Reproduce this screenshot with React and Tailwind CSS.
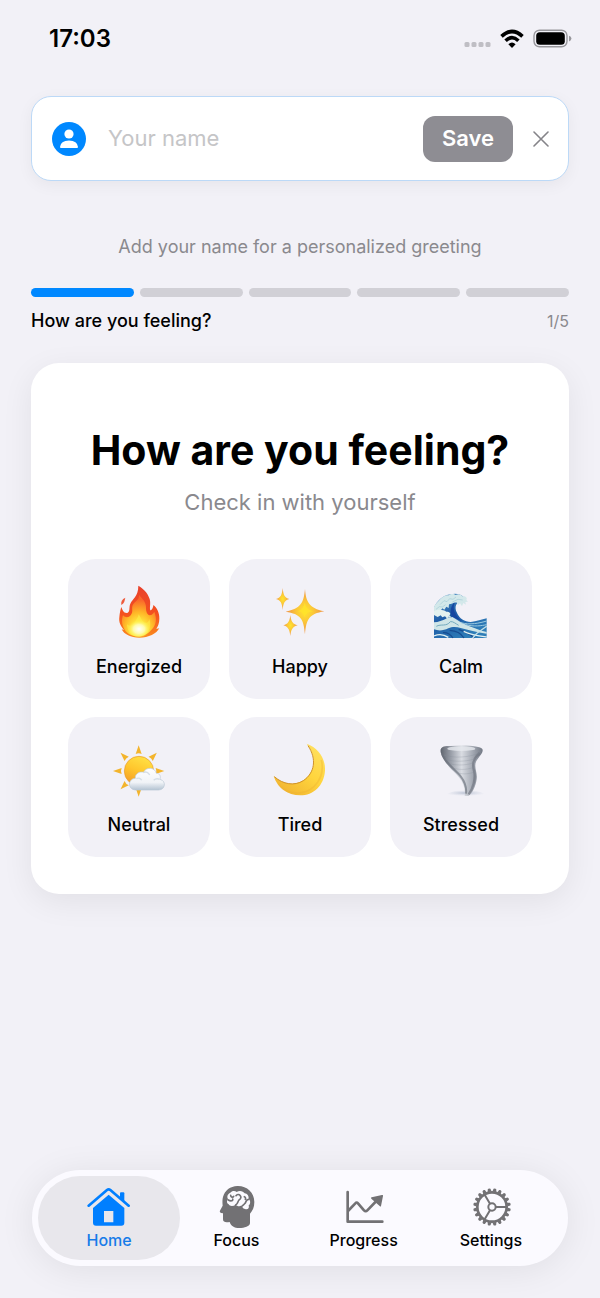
import { useState } from 'react'

function Fire() {
  return (
    <svg viewBox="0 0 162 162" className="size-[54px]" aria-hidden="true">
      <defs>
        <linearGradient id="fireOuter" x1="0" y1="0" x2="0" y2="1">
          <stop offset="0" stopColor="#e8402c" />
          <stop offset="0.55" stopColor="#f4511e" />
          <stop offset="1" stopColor="#fb8c1e" />
        </linearGradient>
        <radialGradient id="fireInner" cx="0.5" cy="0.86" r="0.75">
          <stop offset="0" stopColor="#fffcc0" />
          <stop offset="0.25" stopColor="#ffee42" />
          <stop offset="0.6" stopColor="#ffb526" />
          <stop offset="1" stopColor="#f9642a" />
        </radialGradient>
        <radialGradient id="fireGlow">
          <stop offset="0" stopColor="#ffffff" />
          <stop offset="0.5" stopColor="#fffbb8" stopOpacity="0.9" />
          <stop offset="1" stopColor="#ffee42" stopOpacity="0" />
        </radialGradient>
      </defs>
      <path d="M40 38C38 48 36 56 28 60C26 50 30 42 40 38Z" fill="#ee5a3c" />
      <path
        d="M79 2C92 9 108 24 113 42C117 56 112 68 115 76C120 76 124 66 124 60C134 66 143 84 142 101C142 114 138 123 133 131C137 132 140 130 142 129C134 146 110 158 82 158C56 158 36 148 29 133L36 135C26 124 20 112 22 97C23 84 26 72 28 66C31 74 34 84 44 84C56 82 50 66 55 56C61 42 79 34 79 2Z"
        fill="url(#fireOuter)"
      />
      <path
        d="M81 30C92 42 103 52 102 69C102 80 106 90 113 91C121 91 124 84 127 80C136 103 131 121 120 133C109 146 96 154 80 154C58 154 40 144 34 126C28 112 30 98 33 91C39 98 50 99 56 91C66 79 56 68 64 57C73 46 82 44 81 30Z"
        fill="url(#fireInner)"
      />
      <path
        d="M80 88C88 100 90 110 98 113C108 116 111 106 112 102C121 124 108 154 81 156C58 155 45 138 45 118C51 125 62 123 67 114C72 104 78 100 80 88Z"
        fill="#fff04a"
        opacity="0.55"
      />
      <ellipse cx="81" cy="132" rx="34" ry="27" fill="url(#fireGlow)" />
    </svg>
  )
}

function Sparkles() {
  return (
    <svg viewBox="0 0 162 162" className="size-[54px]" aria-hidden="true">
      <defs>
        <radialGradient id="spark">
          <stop offset="0" stopColor="#ffe52e" />
          <stop offset="0.45" stopColor="#fbc638" />
          <stop offset="1" stopColor="#ee9146" />
        </radialGradient>
      </defs>
      <g fill="url(#spark)">
        <path d="M96 12C99 50 108 70 154 79C108 87 100 102 96 148C92 102 84 87 38 80C84 70 92 54 96 12Z" />
        <path d="M29 9C31 31 35 38 49 42C35 46 31 54 29 75C27 54 23 46 9 42C23 38 27 31 29 9Z" />
        <path d="M52 90C54 109 59 117 74 121C59 125 54 134 52 153C50 134 45 125 31 121C45 117 50 109 52 90Z" />
      </g>
      <path d="M95 52C98 68 104 75 122 79C104 81 98 86 94 98C92 84 86 81 73 79C87 75 92 68 95 52Z" fill="#ffe32b" opacity="0.8" />
    </svg>
  )
}

function Wave() {
  return (
    <svg viewBox="0 0 162 162" className="size-[54px]" aria-hidden="true">
      <defs>
        <linearGradient id="sea" x1="0" y1="0" x2="0.6" y2="1">
          <stop offset="0" stopColor="#5d9ecb" />
          <stop offset="0.5" stopColor="#1d5ba6" />
          <stop offset="1" stopColor="#2f7eb8" />
        </linearGradient>
      </defs>
      <path
        d="M0 68C8 50 25 30 51 28C66 24 80 28 88 35L83 48C65 51 61 67 68 82C76 102 92 111 110 111C128 110 143 103 158 100V159H0Z"
        fill="url(#sea)"
      />
      <path d="M66 48C52 66 60 91 85 109L55 96C47 83 48 62 66 48Z" fill="#1646a0" />
      <path
        d="M0 66C4 55 14 49 19 42C27 35 34 29 44 31C50 25 61 26 65 30C74 25 82 29 85 34C96 33 101 40 97 45L102 50L94 51L96 59L88 54L84 64L78 55L72 61L69 53C60 50 53 58 45 58L44 69L37 65L31 74L25 70L19 78L13 75L0 86Z"
        fill="#d3e8ea"
      />
      <path d="M18 59L30 47L39 50L47 41L57 43L66 36M6 73L16 65L25 66L35 59M55 51L72 43L86 45" fill="none" stroke="#a3cbd6" strokeWidth="2" />
      <path
        d="M0 79C13 72 27 74 37 80C48 80 52 86 46 91L52 97L43 95L40 101L33 94L25 97L20 91L11 96L0 90Z"
        fill="#e3f1ef"
      />
      <path
        d="M0 112C13 112 26 105 36 101C43 94 48 98 55 96C65 101 76 111 91 117C111 125 134 136 158 141V146C127 142 103 135 80 129C68 125 55 124 43 130C29 137 13 138 0 133Z"
        fill="#cfe5e7"
      />
      <path d="M7 124C21 116 37 126 49 110C57 108 66 117 74 121" fill="none" stroke="#72aabe" strokeWidth="3" />
      <path d="M81 113C106 121 138 114 158 108M95 119C121 126 143 122 158 119" fill="none" stroke="#9dcbe1" strokeWidth="3" />
      <path d="M74 133C90 139 112 149 121 159M47 136C67 137 82 146 90 159M27 143C40 142 51 150 57 159" fill="none" stroke="#174c91" strokeWidth="4" />
      <path d="M89 139C112 150 136 153 158 156M0 153C17 145 34 151 43 157" fill="none" stroke="#e2f1f2" strokeWidth="4" />
      <path d="M116 159C130 139 144 135 158 124" fill="none" stroke="#c6e1e8" strokeWidth="4" />
    </svg>
  )
}

function SunCloud() {
  return (
    <svg viewBox="0 0 162 162" className="size-[54px]" aria-hidden="true">
      <defs>
        <linearGradient id="sun" x1="0.7" y1="0" x2="0.3" y2="1">
          <stop offset="0" stopColor="#ffe246" />
          <stop offset="0.5" stopColor="#ffc62d" />
          <stop offset="1" stopColor="#f39a25" />
        </linearGradient>
        <linearGradient id="cloud" x1="0" y1="0" x2="0" y2="1">
          <stop offset="0" stopColor="#ffffff" />
          <stop offset="0.65" stopColor="#f0f3f7" />
          <stop offset="1" stopColor="#b4c3d2" />
        </linearGradient>
      </defs>
      <g fill="#f3b42c">
        {[0, 45, 90, 135, 180, 225, 270, 315].map((deg) => (
          <path key={deg} d="M80 7L89 33Q80 29 71 33Z" transform={`rotate(${deg} 80 84)`} />
        ))}
      </g>
      <circle cx="81" cy="84" r="44" fill="url(#sun)" stroke="#e99a25" strokeWidth="2" />
      <path
        d="M71 141C45 139 48 107 70 106C68 91 85 84 95 88C101 71 129 72 133 91C144 91 147 101 144 109C164 114 160 140 140 141Z"
        fill="url(#cloud)"
        stroke="#bac7d4"
        strokeWidth="2"
      />
      <path d="M73 107C80 103 87 107 89 112M94 89C102 84 110 90 113 96M143 109C136 106 129 108 125 112" fill="none" stroke="#d5dee7" strokeWidth="4" />
    </svg>
  )
}

function Moon() {
  return (
    <svg viewBox="0 0 162 162" className="size-[54px]" aria-hidden="true">
      <defs>
        <linearGradient id="moon" x1="1" y1="0" x2="0.3" y2="1">
          <stop offset="0" stopColor="#ffe267" />
          <stop offset="0.55" stopColor="#ffd53d" />
          <stop offset="1" stopColor="#f2b632" />
        </linearGradient>
      </defs>
      <path
        d="M101 2C136 15 158 46 156 83C153 128 121 157 82 157C43 157 13 134 2 99C29 124 64 129 91 112C125 89 135 44 101 2Z"
        fill="url(#moon)"
      />
      <path d="M4 101C30 124 64 130 91 113C125 90 132 48 105 8" fill="none" stroke="#cf9129" strokeWidth="3" />
      <path d="M145 51C157 101 125 147 78 150C50 151 28 140 16 123" fill="none" stroke="#edb22f" strokeWidth="5" opacity="0.4" />
    </svg>
  )
}

function Tornado() {
  return (
    <svg viewBox="0 0 162 162" className="size-[54px]" aria-hidden="true">
      <defs>
        <linearGradient id="funnel" x1="0" y1="0" x2="1" y2="0">
          <stop offset="0" stopColor="#5f646e" />
          <stop offset="0.25" stopColor="#9a9fa9" />
          <stop offset="0.5" stopColor="#d9dce2" />
          <stop offset="0.75" stopColor="#a6abb5" />
          <stop offset="1" stopColor="#737985" />
        </linearGradient>
        <radialGradient id="dust">
          <stop offset="0" stopColor="#b9c1d2" />
          <stop offset="1" stopColor="#d8dce8" stopOpacity="0" />
        </radialGradient>
        <filter id="soften" x="-10%" y="-10%" width="120%" height="120%">
          <feGaussianBlur stdDeviation="2" />
        </filter>
      </defs>
      <path d="M32 159C50 136 140 134 157 159Z" fill="url(#dust)" />
      <g filter="url(#soften)">
        <path
          d="M20 28C17 11 30 8 50 9C90 5 140 8 145 18C150 28 136 38 127 54C118 70 131 88 128 108C125 130 116 150 104 158H92C95 140 89 121 76 104C62 84 28 62 20 28Z"
          fill="url(#funnel)"
        />
        <ellipse cx="82" cy="17" rx="42" ry="7" fill="#e6e8ee" opacity="0.8" />
        <path d="M24 32C30 55 62 78 80 100C93 117 98 136 96 152" fill="none" stroke="#6a707b" strokeWidth="6" opacity="0.65" />
        <path d="M137 30C118 46 113 61 120 84C126 106 117 136 104 154" fill="none" stroke="#6a707b" strokeWidth="7" opacity="0.6" />
      </g>
      <path d="M28 36C60 46 104 44 136 30M34 49C64 58 104 56 128 45M45 62C74 69 104 66 121 58M59 76C82 82 106 79 120 72M72 90C90 95 111 92 123 86" fill="none" stroke="#868c97" strokeWidth="2" opacity="0.4" />
    </svg>
  )
}

function HomeIcon() {
  return (
    <svg viewBox="0 0 132 132" className="size-[44px]" aria-hidden="true">
      <path d="M5 62L60 15Q65 11 70 15L125 62" fill="none" stroke="currentColor" strokeWidth="8" strokeLinecap="round" strokeLinejoin="round" />
      <path d="M99 25Q99 22 102 22H109Q112 22 112 25V51L99 40Z" fill="currentColor" />
      <path
        d="M65 29L112 69V113Q112 122 103 122H27Q18 122 18 113V69ZM51 78V112H79V78Z"
        fill="currentColor"
        fillRule="evenodd"
      />
    </svg>
  )
}

function FocusIcon() {
  return (
    <svg viewBox="0 0 132 132" className="size-[44px]" aria-hidden="true">
      <path
        d="M70 3C98 2 121 22 121 51C121 67 116 77 108 86V114C108 124 91 129 76 129C61 129 51 124 47 111C37 113 27 113 27 103V85C18 84 15 81 19 75L26 62C25 51 25 43 27 36C32 16 49 4 70 3Z"
        fill="currentColor"
      />
      <path
        d="M49 23C54 17 63 17 68 21C76 15 88 18 92 25C100 26 105 33 104 41C111 48 109 58 104 61C107 71 100 75 93 72C86 72 84 66 86 61C78 65 69 64 65 59C57 65 47 64 44 58C37 55 38 45 43 43C37 36 41 26 49 23Z"
        fill="#fbfaff"
      />
      <path
        d="M50 31C50 37 57 38 59 34M43 45C51 50 58 47 56 42M65 60C72 56 71 49 75 45C82 41 82 35 78 31C75 27 69 28 66 32M104 43C95 43 97 51 93 55C90 59 87 60 86 62M91 35C94 36 96 40 94 43"
        fill="none"
        stroke="currentColor"
        strokeWidth="5"
        strokeLinecap="round"
      />
    </svg>
  )
}

function ProgressIcon() {
  return (
    <svg viewBox="0 0 132 132" className="size-[44px]" aria-hidden="true">
      <path d="M17 21V110H121M18 78L40 55Q44 50 48 55L66 76Q71 81 76 76L106 45" fill="none" stroke="currentColor" strokeWidth="8" strokeLinecap="round" strokeLinejoin="round" />
      <path d="M89 37L120 30Q124 29 123 33L117 63Q116 66 113 63L88 41Q85 38 89 37Z" fill="currentColor" />
    </svg>
  )
}

function SettingsIcon() {
  const teeth = Array.from({ length: 20 }, (_, i) => i * 18)
  return (
    <svg viewBox="0 0 132 132" className="size-[44px]" aria-hidden="true">
      <g fill="currentColor">
        {teeth.map((deg) => (
          <path key={deg} d="M63 20L65 11Q69 8 73 11L75 20Z" transform={`rotate(${deg + 9} 69 66)`} />
        ))}
      </g>
      <g fill="none" stroke="currentColor">
        <circle cx="69" cy="66" r="44" strokeWidth="8" />
        <circle cx="69" cy="66" r="11" strokeWidth="6" />
        <path d="M80 66H112M63 56L47 29M63 76L47 103" strokeWidth="6" />
      </g>
    </svg>
  )
}

const moods = [
  { label: 'Energized', icon: Fire },
  { label: 'Happy', icon: Sparkles },
  { label: 'Calm', icon: Wave },
  { label: 'Neutral', icon: SunCloud },
  { label: 'Tired', icon: Moon },
  { label: 'Stressed', icon: Tornado }
]

const tabs = [
  { label: 'Home', icon: HomeIcon },
  { label: 'Focus', icon: FocusIcon },
  { label: 'Progress', icon: ProgressIcon },
  { label: 'Settings', icon: SettingsIcon }
]

function StatusBar() {
  return (
    <header className="flex h-[78px] items-center justify-between pr-7 pl-[49px]">
      <span className="text-[24px] font-semibold">17:03</span>
      <div className="flex items-center gap-[9px]">
        <svg viewBox="0 0 27 20" className="h-5 w-[27px]" aria-hidden="true">
          {[0, 7, 14, 21].map((x) => (
            <rect key={x} x={x + 0.5} y="13" width="5" height="5" rx="1.5" fill="#bfbec4" />
          ))}
        </svg>
        <svg viewBox="0 0 24 20" className="h-5 w-6" aria-hidden="true">
          <g fill="none" stroke="#000" strokeWidth="3.6">
            <path d="M1.5 7.4Q12 -2.4 22.5 7.4" />
            <path d="M5.6 11.8Q12 5.6 18.4 11.8" />
          </g>
          <path d="M12 19L8.4 15.2Q12 12 15.6 15.2Z" fill="#000" />
        </svg>
        <svg viewBox="0 0 39 20" className="h-5 w-[39px]" aria-hidden="true">
          <rect x="1" y="1.2" width="33" height="16.6" rx="5.5" fill="none" stroke="#98979c" strokeWidth="1.4" />
          <rect x="3.2" y="3.2" width="28.6" height="12.6" rx="3.6" fill="#000" />
          <path d="M36 6.8Q38.4 7.6 38.4 9.6T36 12.4Z" fill="#98979c" />
        </svg>
      </div>
    </header>
  )
}

export default function App() {
  const [name, setName] = useState('')
  const [mood, setMood] = useState(null)

  return (
    <div className="flex min-h-screen flex-col bg-[#f2f1f7] font-['Inter','Liberation_Sans',sans-serif] text-black">
      <StatusBar />

      <main className="px-[31px] pt-[18px]">
        <form
          onSubmit={(e) => e.preventDefault()}
          className="flex h-[85px] items-center rounded-[20px] border border-[#bcd9f7] bg-white pr-[15px] pl-5 shadow-[0_4px_16px_rgba(0,0,0,0.05)]"
        >
          <svg viewBox="0 0 34 34" className="size-[34px] shrink-0" aria-hidden="true">
            <circle cx="17" cy="17" r="17" fill="#0088ff" />
            <circle cx="17" cy="12" r="4.6" fill="#fff" />
            <path d="M8 25Q8.600 18.400 17 18.400T26 25Q26 26 25 26H9Q8 26 8 25Z" fill="#fff" />
          </svg>
          <input
            type="text"
            aria-label="Your name"
            placeholder="Your name"
            value={name}
            onChange={(e) => setName(e.target.value)}
            className="ml-[22px] min-w-0 flex-1 text-[22px] outline-none placeholder:text-[#c5c5c7]"
          />
          <button type="submit" className="h-[46px] w-[90px] rounded-xl bg-[#8e8d93] text-[22px] font-semibold text-white">
            Save
          </button>
          <button type="button" aria-label="Dismiss" className="ml-4 flex size-6 items-center justify-center text-[#858489]">
            <svg viewBox="0 0 16 16" className="size-4" aria-hidden="true">
              <path d="M1 1L15 15M15 1L1 15" stroke="currentColor" strokeWidth="1.6" strokeLinecap="round" />
            </svg>
          </button>
        </form>

        <p className="mt-[54px] text-center text-[18px] leading-6 text-[#8a898e]">
          Add your name for a personalized greeting
        </p>

        <div className="mt-[29px] flex gap-1.5">
          {[1, 2, 3, 4, 5].map((step) => (
            <div key={step} className={`h-[9px] flex-1 rounded-full ${step === 1 ? 'bg-[#0088ff]' : 'bg-[#d1d0d6]'}`} />
          ))}
        </div>
        <div className="mt-3 flex items-center justify-between leading-6">
          <span className="text-[18px] font-medium">How are you feeling?</span>
          <span className="text-[16px] text-[#8a898e]">1/5</span>
        </div>

        <section className="mt-[30px] rounded-[28px] bg-white px-[37px] pt-[61px] pb-[37px] shadow-[0_8px_32px_rgba(0,0,0,0.07)]">
          <h1 className="text-center text-[41px] leading-[52px] font-bold">How are you feeling?</h1>
          <p className="mt-3 text-center text-[22px] leading-7 text-[#8a898e]">Check in with yourself</p>
          <div className="mt-[43px] grid grid-cols-3 gap-x-[19px] gap-y-[18px]">
            {moods.map(({ label, icon: Icon }) => (
              <button
                key={label}
                type="button"
                aria-pressed={mood === label}
                onClick={() => setMood(label)}
                className="flex h-[140px] flex-col items-center rounded-[28px] bg-[#f2f1f7] pt-[26px]"
              >
                <Icon />
                <span className="mt-4 text-[18px] leading-6 font-medium">{label}</span>
              </button>
            ))}
          </div>
        </section>
      </main>

      <nav className="mx-8 mt-auto mb-8 flex -space-x-[15px] rounded-full bg-[#fbfaff] p-1.5 shadow-[0_4px_36px_rgba(0,0,0,0.08)]">
        {tabs.map(({ label, icon: Icon }, i) => (
          <a
            key={label}
            href={`#${label.toLowerCase()}`}
            aria-current={i === 0 ? 'page' : undefined}
            className={`flex flex-1 flex-col items-center rounded-full py-[9px] ${i === 0 ? 'bg-[#e8e7ec] text-[#007fff]' : 'text-[#727174]'}`}
          >
            <Icon />
            <span className={`text-[16px] leading-[22px] font-medium ${i === 0 ? 'text-[#167be8]' : 'text-black'}`}>{label}</span>
          </a>
        ))}
      </nav>
    </div>
  )
}
